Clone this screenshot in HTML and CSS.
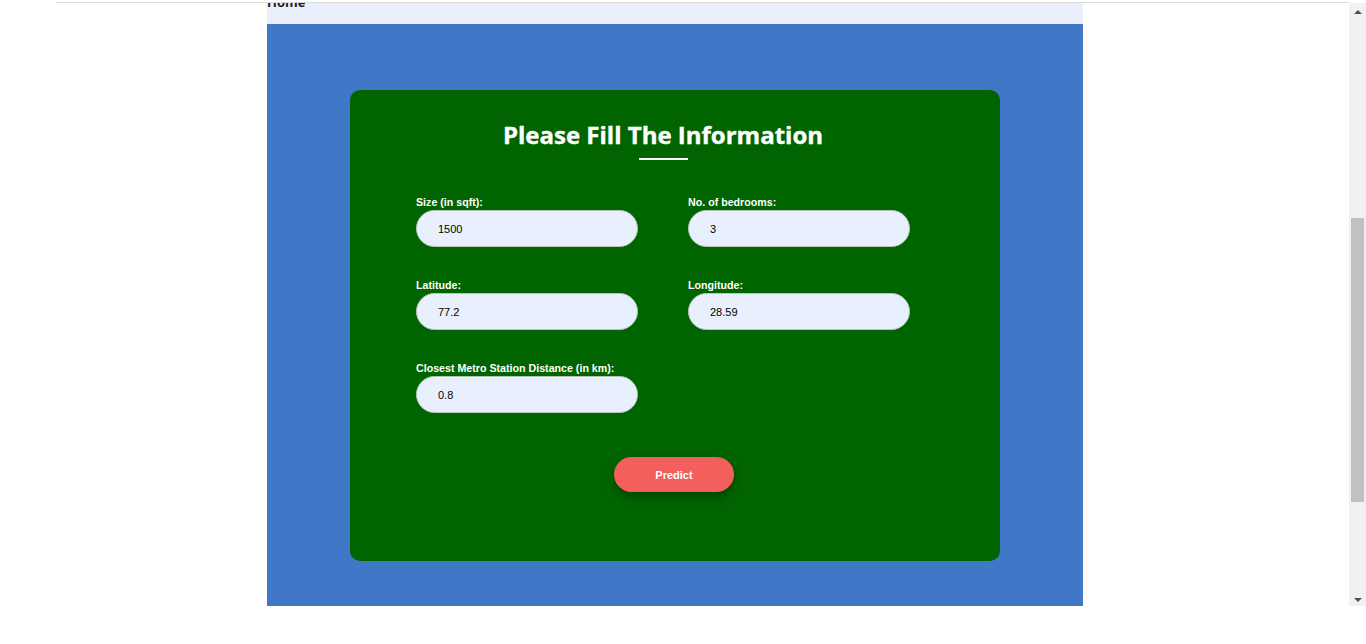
FILE: index.html
```html
<!DOCTYPE html>
<html lang="en">
<head>
<meta charset="utf-8">
<title>House Price Prediction</title>
<link rel="stylesheet" href="styles.css">
</head>
<body>
<div class="window">
  <div class="page">
    <div class="topline"></div>
    <header class="nav"><span class="nav-link">Home</span></header>
    <main class="hero">
      <section class="card">
        <div class="form-area">
          <h2 class="title">Please Fill The Information</h2>
          <div class="title-rule"></div>
          <form class="grid">
            <div class="field">
              <label class="label">Size (in sqft):</label>
              <input class="input" type="text" value="1500">
            </div>
            <div class="field">
              <label class="label">No. of bedrooms:</label>
              <input class="input" type="text" value="3">
            </div>
            <div class="field">
              <label class="label">Latitude:</label>
              <input class="input" type="text" value="77.2">
            </div>
            <div class="field">
              <label class="label">Longitude:</label>
              <input class="input" type="text" value="28.59">
            </div>
            <div class="field">
              <label class="label">Closest Metro Station Distance (in km):</label>
              <input class="input" type="text" value="0.8">
            </div>
          </form>
        </div>
        <div class="actions">
          <button class="btn" type="button">Predict</button>
        </div>
      </section>
    </main>
  </div>
  <div class="scrollbar">
    <div class="sb-btn"><span class="arrow-up"></span></div>
    <div class="sb-track"><div class="sb-thumb"></div></div>
    <div class="sb-btn sb-btn-down"><span class="arrow-down"></span></div>
  </div>
</div>
</body>
</html>
```

FILE: styles.css
```css
* { box-sizing: border-box; }

html, body {
  margin: 0;
  padding: 0;
  height: 644px;
  overflow: hidden;
  background: #ffffff;
}

.window {
  display: flex;
  width: 1366px;
  height: 644px;
}

.page {
  width: 1349px;
  display: flex;
  flex-direction: column;
}

.topline {
  margin: 2px 0 0 56px;
  height: 1px;
  background: #dcdcdc;
}

.nav {
  margin-left: 267px;
  width: 816px;
  height: 21px;
  background: #e9f0fb;
  overflow: hidden;
  display: flex;
  align-items: flex-start;
}

.nav-link {
  font-family: "Open Sans", "Liberation Sans", sans-serif;
  font-weight: 700;
  font-size: 13px;
  line-height: 13px;
  color: #1e1e1e;
  margin-top: -7px;
}

.hero {
  margin-left: 267px;
  width: 816px;
  height: 582px;
  background: #4177c7;
  padding: 66px 83px 45px;
}

.card {
  height: 471px;
  background: #006400;
  border-radius: 10px;
  padding-top: 29px;
}

.form-area {
  margin-left: 66px;
  width: 494px;
  display: flex;
  flex-direction: column;
  align-items: center;
}

.title {
  margin: 0;
  font-family: "Open Sans", "Liberation Sans", sans-serif;
  font-weight: 700;
  font-size: 24px;
  line-height: 32px;
  color: #ffffff;
  text-align: center;
  -webkit-text-stroke: 0.4px #ffffff;
}

.title-rule {
  margin-top: 7px;
  width: 49px;
  height: 2px;
  background: #ffffff;
}

.grid {
  margin: 36px 0 0;
  width: 494px;
  display: grid;
  grid-template-columns: 222px 222px;
  column-gap: 50px;
  row-gap: 32px;
}

.field {
  display: flex;
  flex-direction: column;
}

.label {
  font-family: "Liberation Sans", Arial, sans-serif;
  font-weight: 700;
  font-size: 10.67px;
  line-height: 12px;
  color: #ffffff;
  margin-bottom: 2px;
}

.input {
  width: 222px;
  height: 37px;
  margin: 0;
  border: 1px solid #b9c3b9;
  border-radius: 19px;
  background: #e8f0fe;
  padding: 0 0 0 21px;
  font-family: "Liberation Sans", Arial, sans-serif;
  font-size: 11px;
  color: #000000;
  outline: none;
}

.actions {
  display: flex;
  justify-content: center;
  margin-top: 44px;
  padding-right: 2px;
}

.btn {
  width: 120px;
  height: 35px;
  border: none;
  border-radius: 18px;
  background: #f25f5c;
  color: #ffffff;
  font-family: "Liberation Sans", Arial, sans-serif;
  font-weight: 700;
  font-size: 11px;
  box-shadow: 0 4px 8px rgba(0, 0, 0, 0.35);
  cursor: pointer;
}

.scrollbar {
  width: 17px;
  margin-top: 3px;
  height: 603px;
  background: #f1f1f1;
  display: flex;
  flex-direction: column;
}

.sb-btn {
  height: 17px;
  display: flex;
  align-items: center;
  justify-content: center;
}

.sb-btn-down {
  align-items: flex-end;
  padding-bottom: 4px;
}

.arrow-up {
  width: 0;
  height: 0;
  border-left: 4px solid transparent;
  border-right: 4px solid transparent;
  border-bottom: 4px solid #505050;
}

.arrow-down {
  width: 0;
  height: 0;
  border-left: 4px solid transparent;
  border-right: 4px solid transparent;
  border-top: 4px solid #505050;
}

.sb-track {
  flex: 1;
  padding: 198px 2px 0;
}

.sb-thumb {
  height: 284px;
  background: #c1c1c1;
}
```
